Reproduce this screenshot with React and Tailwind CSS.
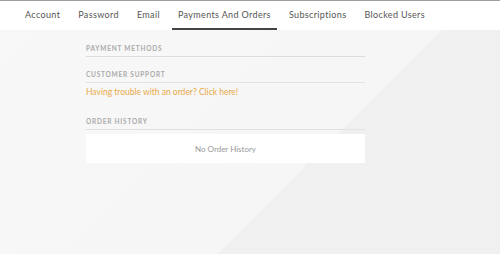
export default function App() {
  const tabs = ["Account", "Password", "Email", "Payments And Orders", "Subscriptions", "Blocked Users"];
  return (
    <div className="w-[500px] h-[254px] flex flex-col overflow-hidden" style={{ fontFamily: "Lato, 'Open Sans', sans-serif" }}>
      <div className="h-[30px] bg-white border-t border-[#a0a0a0] flex items-stretch pl-[19px] gap-[6px]">
        {tabs.map((t, i) => (
          <div
            key={t}
            className={
              "px-[6px] pt-px flex items-center text-[9px] tracking-[0.04em] text-[#555] border-b-2 " +
              (i === 3 ? "border-[#444] text-[#333]" : "border-transparent")
            }
          >
            {t}
          </div>
        ))}
      </div>
      <div className="flex-1 bg-[linear-gradient(135deg,#f8f8f8_0%,#f6f6f6_61%,#f0f0f0_61%,#f0f0f0_100%)]">
        <div className="ml-[86px] w-[279px] pt-[15px]">
          <div className="text-[6.5px] font-bold tracking-[0.12em] text-[#aaa] leading-[8px]">PAYMENT METHODS</div>
          <div className="mt-[3px] h-px bg-[#dcdcdc]"></div>
          <div className="mt-[14px] text-[6.5px] font-bold tracking-[0.12em] text-[#aaa] leading-[8px]">CUSTOMER SUPPORT</div>
          <div className="mt-[3px] h-px bg-[#e2e2e2]"></div>
          <div className="mt-[4px] text-[8.5px] text-[#e8a94a] leading-[10px]">Having trouble with an order? Click here!</div>
          <div className="mt-[21px] text-[6.5px] font-bold tracking-[0.12em] text-[#aaa] leading-[8px]">ORDER HISTORY</div>
          <div className="mt-[3px] h-px bg-[#e2e2e2]"></div>
          <div className="mt-[4px] h-[29px] bg-white flex items-center justify-center text-[8px] text-[#999]">No Order History</div>
        </div>
      </div>
    </div>
  );
}
